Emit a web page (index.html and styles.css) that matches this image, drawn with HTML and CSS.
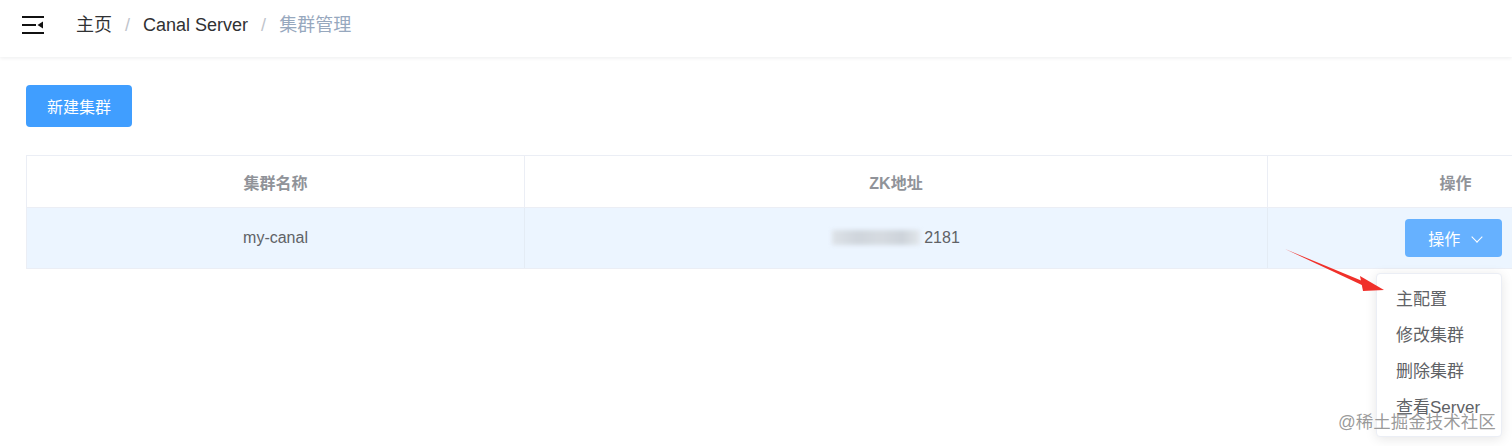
FILE: index.html
```html
<!DOCTYPE html>
<html lang="zh-CN">
<head>
  <meta charset="UTF-8">
  <title>集群管理</title>
  <link rel="stylesheet" href="styles.css">
</head>
<body>

<div class="app">

  <!-- 顶部导航 -->
  <div class="navbar">
    <div class="hamburger">
      <svg width="22" height="18" viewBox="0 0 22 18">
        <rect x="0" y="0" width="22" height="2" fill="#111"/>
        <rect x="0" y="8" width="14" height="2" fill="#111"/>
        <polygon points="15.5,9 21,5.5 21,12.5" fill="#111"/>
        <rect x="0" y="16" width="22" height="2" fill="#111"/>
      </svg>
    </div>
    <div class="breadcrumb">
      <span class="crumb">主页</span>
      <span class="sep">/</span>
      <span class="crumb">Canal Server</span>
      <span class="sep">/</span>
      <span class="crumb current">集群管理</span>
    </div>
  </div>

  <!-- 内容 -->
  <div class="content">
    <button class="btn-primary">新建集群</button>

    <div class="table-wrap">
      <table class="cluster-table">
        <tr>
          <th class="col-name">集群名称</th>
          <th class="col-zk">ZK地址</th>
          <th class="col-op">操作</th>
        </tr>
        <tr class="row-hover">
          <td>my-canal</td>
          <td><span class="blur-ip"></span>2181</td>
          <td>
            <div class="op-dropdown">
              <button class="btn-op">操作 <span class="chevron"></span></button>
              <ul class="dropdown-menu">
                <li>主配置</li>
                <li>修改集群</li>
                <li>删除集群</li>
                <li>查看Server</li>
              </ul>
            </div>
          </td>
        </tr>
      </table>
    </div>
  </div>

  <!-- 标注箭头 -->
  <svg class="mark-arrow" width="110" height="50" viewBox="0 0 110 50">
    <polygon points="5,4 86,37.5 84,41" fill="#f0302a"/>
    <polygon points="80,31 104,45 83,46" fill="#f0302a"/>
  </svg>

  <div class="watermark">@稀土掘金技术社区</div>
</div>

</body>
</html>
```

FILE: styles.css
```css
html, body {
  margin: 0;
  padding: 0;
  background-color: #fff;
}

body {
  font-family: "Liberation Sans", "Noto Sans CJK SC", Arial, sans-serif;
  color: #303133;
}

.app {
  position: relative;
  width: 1512px;
  height: 446px;
  overflow: hidden;
}

.navbar {
  height: 57px;
  box-sizing: border-box;
  padding-top: 15px;
  display: flex;
  align-items: flex-start;
  background-color: #fff;
  box-shadow: 0 1px 4px rgba(0, 21, 41, 0.08);
}

.hamburger {
  width: 22px;
  height: 18px;
  margin-left: 22px;
  margin-top: 1px;
}

.hamburger svg {
  display: block;
}

.breadcrumb {
  margin-left: 32px;
  font-size: 18px;
  line-height: 20px;
}

.crumb {
  color: #303133;
}

.crumb.current {
  color: #97a8be;
}

.sep {
  color: #c0c4cc;
  margin: 0 8px;
}

.content {
  padding: 28px 0 0 26px;
}

.btn-primary {
  display: block;
  width: 106px;
  height: 42px;
  background-color: #409eff;
  color: #fff;
  border: none;
  border-radius: 4px;
  font-family: inherit;
  font-size: 16px;
  padding: 0;
  cursor: pointer;
}

.table-wrap {
  margin-top: 28px;
  width: 1614px;
}

.cluster-table {
  width: 1614px;
  border-collapse: collapse;
  table-layout: fixed;
  border-top: 1px solid #ebeef5;
  border-left: 1px solid #ebeef5;
}

.col-name { width: 497px; }
.col-zk { width: 742px; }
.col-op { width: 375px; }

.cluster-table th,
.cluster-table td {
  text-align: center;
  border-right: 1px solid #ebeef5;
  border-bottom: 1px solid #ebeef5;
  padding: 0;
}

.cluster-table th {
  height: 51px;
  color: #909399;
  font-size: 16px;
  font-weight: bold;
}

.cluster-table td {
  height: 60px;
  color: #606266;
  font-size: 16px;
}

.row-hover td {
  background-color: #ecf5ff;
  border-right-color: #e4ecf5;
}

.blur-ip {
  display: inline-block;
  width: 88px;
  height: 15px;
  margin-right: 4px;
  vertical-align: -2px;
  background: linear-gradient(90deg, #dde2e8 0%, #cfd5dc 30%, #d6dbe1 55%, #cdd3da 80%, #e2e7ec 100%);
  filter: blur(2px);
}

.op-dropdown {
  position: relative;
  display: inline-block;
  margin-left: -4px;
}

.btn-op {
  display: block;
  width: 97px;
  height: 38px;
  background-color: #66b1ff;
  color: #fff;
  border: none;
  border-radius: 4px;
  font-family: inherit;
  font-size: 16px;
  padding: 0 0 0 2px;
}

.chevron {
  display: inline-block;
  width: 7px;
  height: 7px;
  border-right: 1.5px solid #fff;
  border-bottom: 1.5px solid #fff;
  transform: rotate(45deg);
  margin-left: 8px;
  vertical-align: 4px;
}

.dropdown-menu {
  position: absolute;
  top: 54px;
  right: 0;
  width: 124px;
  margin: 0;
  padding: 8px 0 10px;
  list-style: none;
  background-color: #fff;
  border: 1px solid #ebeef5;
  border-radius: 4px;
  box-shadow: 0 2px 12px rgba(0, 0, 0, 0.1);
  text-align: left;
  z-index: 5;
}

.dropdown-menu li {
  height: 36px;
  line-height: 36px;
  padding-left: 19px;
  font-size: 17px;
  color: #606266;
  white-space: nowrap;
}

.mark-arrow {
  position: absolute;
  left: 1280px;
  top: 245px;
  z-index: 6;
}

.watermark {
  position: absolute;
  left: 1338px;
  top: 408px;
  font-size: 17.5px;
  color: rgba(110, 110, 110, 0.7);
  z-index: 7;
  text-shadow: 0 0 1px #fff;
}
```
